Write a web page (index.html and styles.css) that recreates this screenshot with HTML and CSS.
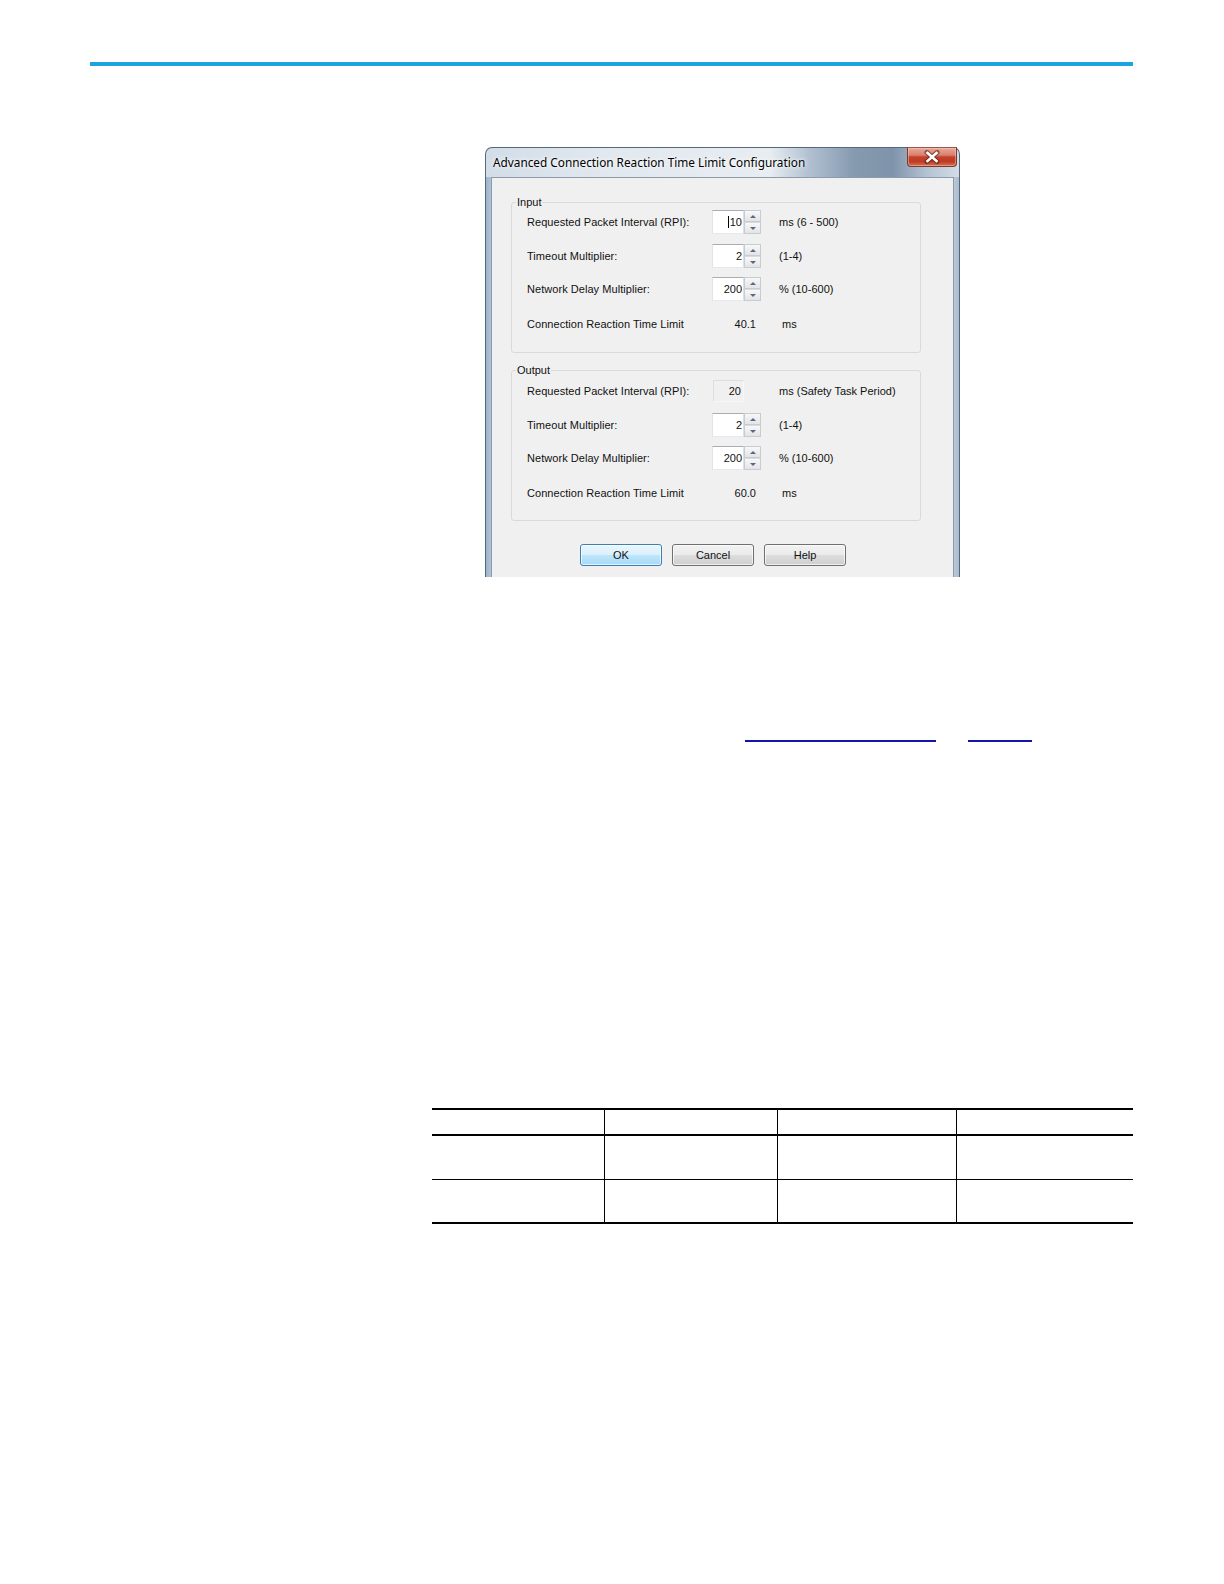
FILE: index.html
```html
<!DOCTYPE html>
<html lang="en">
<head>
<meta charset="utf-8">
<title>Advanced Connection Reaction Time Limit Configuration</title>
<link rel="stylesheet" href="styles.css">
</head>
<body>
<div class="page">
  <div class="rule"></div>

  <div class="figure">
    <div class="dialog">
      <div class="titlebar">
        <span class="title">Advanced Connection Reaction Time Limit Configuration</span>
        <span class="close">
          <svg width="20" height="14" viewBox="0 0 20 14">
            <path d="M5 2.5 L15 11.5 M15 2.5 L5 11.5" stroke="#4a1a14" stroke-width="5" stroke-linecap="round" fill="none" opacity="0.55"/>
            <path d="M5.5 3 L14.5 11 M14.5 3 L5.5 11" stroke="#ffffff" stroke-width="2.6" stroke-linecap="square" fill="none"/>
          </svg>
        </span>
      </div>
      <div class="client">
        <fieldset class="group group-in">
          <legend>Input</legend>
          <div class="row">
            <span class="label">Requested Packet Interval (RPI):</span>
            <span class="ctrl"><span class="box"><span class="caret"></span>10</span><span class="spin"><span class="sb up"></span><span class="sb dn"></span></span></span>
            <span class="unit">ms (6 - 500)</span>
          </div>
          <div class="row g10">
            <span class="label">Timeout Multiplier:</span>
            <span class="ctrl"><span class="box">2</span><span class="spin"><span class="sb up"></span><span class="sb dn"></span></span></span>
            <span class="unit">(1-4)</span>
          </div>
          <div class="row g9">
            <span class="label">Network Delay Multiplier:</span>
            <span class="ctrl"><span class="box">200</span><span class="spin"><span class="sb up"></span><span class="sb dn"></span></span></span>
            <span class="unit">% (10-600)</span>
          </div>
          <div class="row g11">
            <span class="label">Connection Reaction Time Limit</span>
            <span class="val">40.1</span>
            <span class="unit unit-val">ms</span>
          </div>
        </fieldset>

        <fieldset class="group group-out">
          <legend>Output</legend>
          <div class="row">
            <span class="label">Requested Packet Interval (RPI):</span>
            <span class="ctrl"><span class="box box-off">20</span></span>
            <span class="unit">ms (Safety Task Period)</span>
          </div>
          <div class="row g10">
            <span class="label">Timeout Multiplier:</span>
            <span class="ctrl"><span class="box">2</span><span class="spin"><span class="sb up"></span><span class="sb dn"></span></span></span>
            <span class="unit">(1-4)</span>
          </div>
          <div class="row g9">
            <span class="label">Network Delay Multiplier:</span>
            <span class="ctrl"><span class="box">200</span><span class="spin"><span class="sb up"></span><span class="sb dn"></span></span></span>
            <span class="unit">% (10-600)</span>
          </div>
          <div class="row g11">
            <span class="label">Connection Reaction Time Limit</span>
            <span class="val">60.0</span>
            <span class="unit unit-val">ms</span>
          </div>
        </fieldset>

        <div class="buttons">
          <span class="btn btn-default">OK</span>
          <span class="btn">Cancel</span>
          <span class="btn">Help</span>
        </div>
      </div>
    </div>
  </div>

  <div class="links">
    <span class="link link-a"></span>
    <span class="link link-b"></span>
  </div>

  <div class="tbl">
    <div class="cell th"></div>
    <div class="cell th col"></div>
    <div class="cell th col"></div>
    <div class="cell th col"></div>
    <div class="cell td1"></div>
    <div class="cell td1 col"></div>
    <div class="cell td1 col"></div>
    <div class="cell td1 col"></div>
    <div class="cell td2"></div>
    <div class="cell td2 col"></div>
    <div class="cell td2 col"></div>
    <div class="cell td2 col"></div>
  </div>
</div>
</body>
</html>
```

FILE: styles.css
```css
html, body {
  margin: 0;
  padding: 0;
  background: #ffffff;
}

body {
  font-family: "Liberation Sans", Arial, sans-serif;
  color: #111111;
}

.page {
  width: 1224px;
  min-height: 1584px;
  display: flex;
  flex-direction: column;
}

.rule {
  margin: 62px 91px 0 90px;
  height: 4px;
  background: #1ba4df;
}

.figure {
  margin: 81px 0 0 485px;
  width: 475px;
  height: 430px;
}

.dialog {
  box-sizing: border-box;
  width: 475px;
  height: 430px;
  border: 1px solid #56677a;
  border-bottom: 0;
  border-radius: 7px 7px 0 0;
  padding: 0 5px;
  display: flex;
  flex-direction: column;
  background:
    linear-gradient(to right, #d2dde8 0%, #e1e8ef 25%, #e8edf2 60%, #b3c2d2 68%, #8599af 78%, #7f93aa 86%, #b3c2d1 93%, #d3dde7 100%) top left / 100% 29px no-repeat,
    linear-gradient(to right, #9db4cb 0%, #b8c9da 1.5%, #c9d6e3 50%, #c4d2df 98%, #a9bccf 100%);
}

.titlebar {
  flex: none;
  height: 29px;
  display: flex;
  align-items: flex-start;
}

.title {
  margin: 6px 0 0 2px;
  font-family: "Noto Sans", "Open Sans", sans-serif;
  font-size: 11.8px;
  line-height: 16px;
  color: #000000;
  text-shadow: 0 0 6px #ffffff, 0 0 3px #ffffff;
  white-space: nowrap;
}

.close {
  margin: -1px -3px 0 auto;
  width: 50px;
  height: 20px;
  box-sizing: border-box;
  border: 1px solid #7a3a30;
  border-top-color: #96584c;
  border-radius: 0 0 4px 4px;
  background: linear-gradient(#e8a898 0%, #d8806c 40%, #c4402a 50%, #bd3c25 75%, #d66f52 100%);
  box-shadow: inset 0 0 0 1px rgba(255, 210, 200, 0.45);
  display: flex;
  align-items: center;
  justify-content: center;
}

.client {
  flex: 1;
  background: #f0f0f0;
  border: 1px solid #8c9aaa;
  border-bottom: 0;
  padding: 0 0 0 19px;
  display: flex;
  flex-direction: column;
  font-size: 11px;
}

.group {
  box-sizing: border-box;
  width: 410px;
  margin: 17px 0 0 0;
  border: 1px solid #d5dbe1;
  border-radius: 3px;
  padding: 1px 0 16px 5px;
  min-inline-size: 0;
}

.group-out {
  margin-top: 10px;
  padding: 2px 0 15px 5px;
}

.group legend {
  margin-left: -1px;
  padding: 0 1px;
  font-size: 11px;
  line-height: 14px;
  color: #111111;
}

.row {
  display: flex;
  align-items: center;
  height: 24px;
  margin-left: 10px;
  white-space: nowrap;
}

.g9 { margin-top: 9px; }
.g10 { margin-top: 10px; }
.g11 { margin-top: 11px; }

.label {
  flex: none;
  width: 185px;
  letter-spacing: 0.05px;
}

.ctrl {
  flex: none;
  width: 49px;
  height: 24px;
  display: flex;
  align-items: center;
}

.box {
  box-sizing: border-box;
  width: 32px;
  height: 24px;
  border: 1px solid;
  border-color: #abadb3 #dbdfe6 #e3e9ef #e2e3ea;
  background: #ffffff;
  text-align: right;
  padding-right: 1px;
  line-height: 20px;
  display: flex;
  align-items: center;
  justify-content: flex-end;
}

.caret {
  width: 1px;
  height: 12px;
  background: #000000;
  margin-right: 1px;
}

.box-off {
  width: 31px;
  height: 22px;
  margin-left: 1px;
  background: #f0f0f0;
  border-color: #dedede #f7f7f7 #f7f7f7 #dedede;
  padding-right: 2px;
}

.spin {
  width: 17px;
  height: 24px;
  display: flex;
  flex-direction: column;
}

.sb {
  flex: 1;
  box-sizing: border-box;
  border: 1px solid #c7ccd3;
  background: linear-gradient(#f8f8f8, #e4e4e4);
  display: flex;
  align-items: center;
  justify-content: center;
}

.dn {
  border-top-color: #d8dce1;
}

.sb::before {
  content: "";
  width: 0;
  height: 0;
  border-left: 3px solid transparent;
  border-right: 3px solid transparent;
}

.up::before {
  border-bottom: 3px solid #56698c;
}

.dn::before {
  border-top: 3px solid #56698c;
}

.unit {
  margin-left: 18px;
}

.val {
  flex: none;
  width: 44px;
  text-align: right;
}

.unit-val {
  margin-left: 26px;
}

.buttons {
  display: flex;
  gap: 10px;
  margin: 23px 0 0 69px;
}

.btn {
  box-sizing: border-box;
  width: 82px;
  height: 22px;
  border: 1px solid #707070;
  border-radius: 3px;
  background: linear-gradient(#f2f2f2 0%, #ebebeb 50%, #dddddd 51%, #cfcfcf 100%);
  box-shadow: inset 0 0 0 1px rgba(255, 255, 255, 0.7);
  display: flex;
  align-items: center;
  justify-content: center;
  font-size: 11px;
  color: #111111;
}

.btn-default {
  border-color: #3c7fb1;
  background: linear-gradient(#eaf6fd 0%, #d9f0fc 50%, #bee6fd 51%, #a7d9f5 100%);
}

.links {
  display: flex;
  margin-top: 163px;
  height: 2px;
}

.link {
  height: 2px;
  background: #1414aa;
}

.link-a {
  margin-left: 745px;
  width: 191px;
}

.link-b {
  margin-left: 32px;
  width: 64px;
}

.tbl {
  margin: 366px 0 0 432px;
  width: 701px;
  display: grid;
  grid-template-columns: 172px 173px 179px 177px;
  border-top: 2px solid #000000;
  border-bottom: 2px solid #000000;
}

.cell {
  box-sizing: content-box;
}

.col {
  border-left: 1px solid #000000;
}

.th {
  height: 24px;
  border-bottom: 2px solid #000000;
}

.td1 {
  height: 43px;
  border-bottom: 1px solid #000000;
}

.td2 {
  height: 42px;
}
```
